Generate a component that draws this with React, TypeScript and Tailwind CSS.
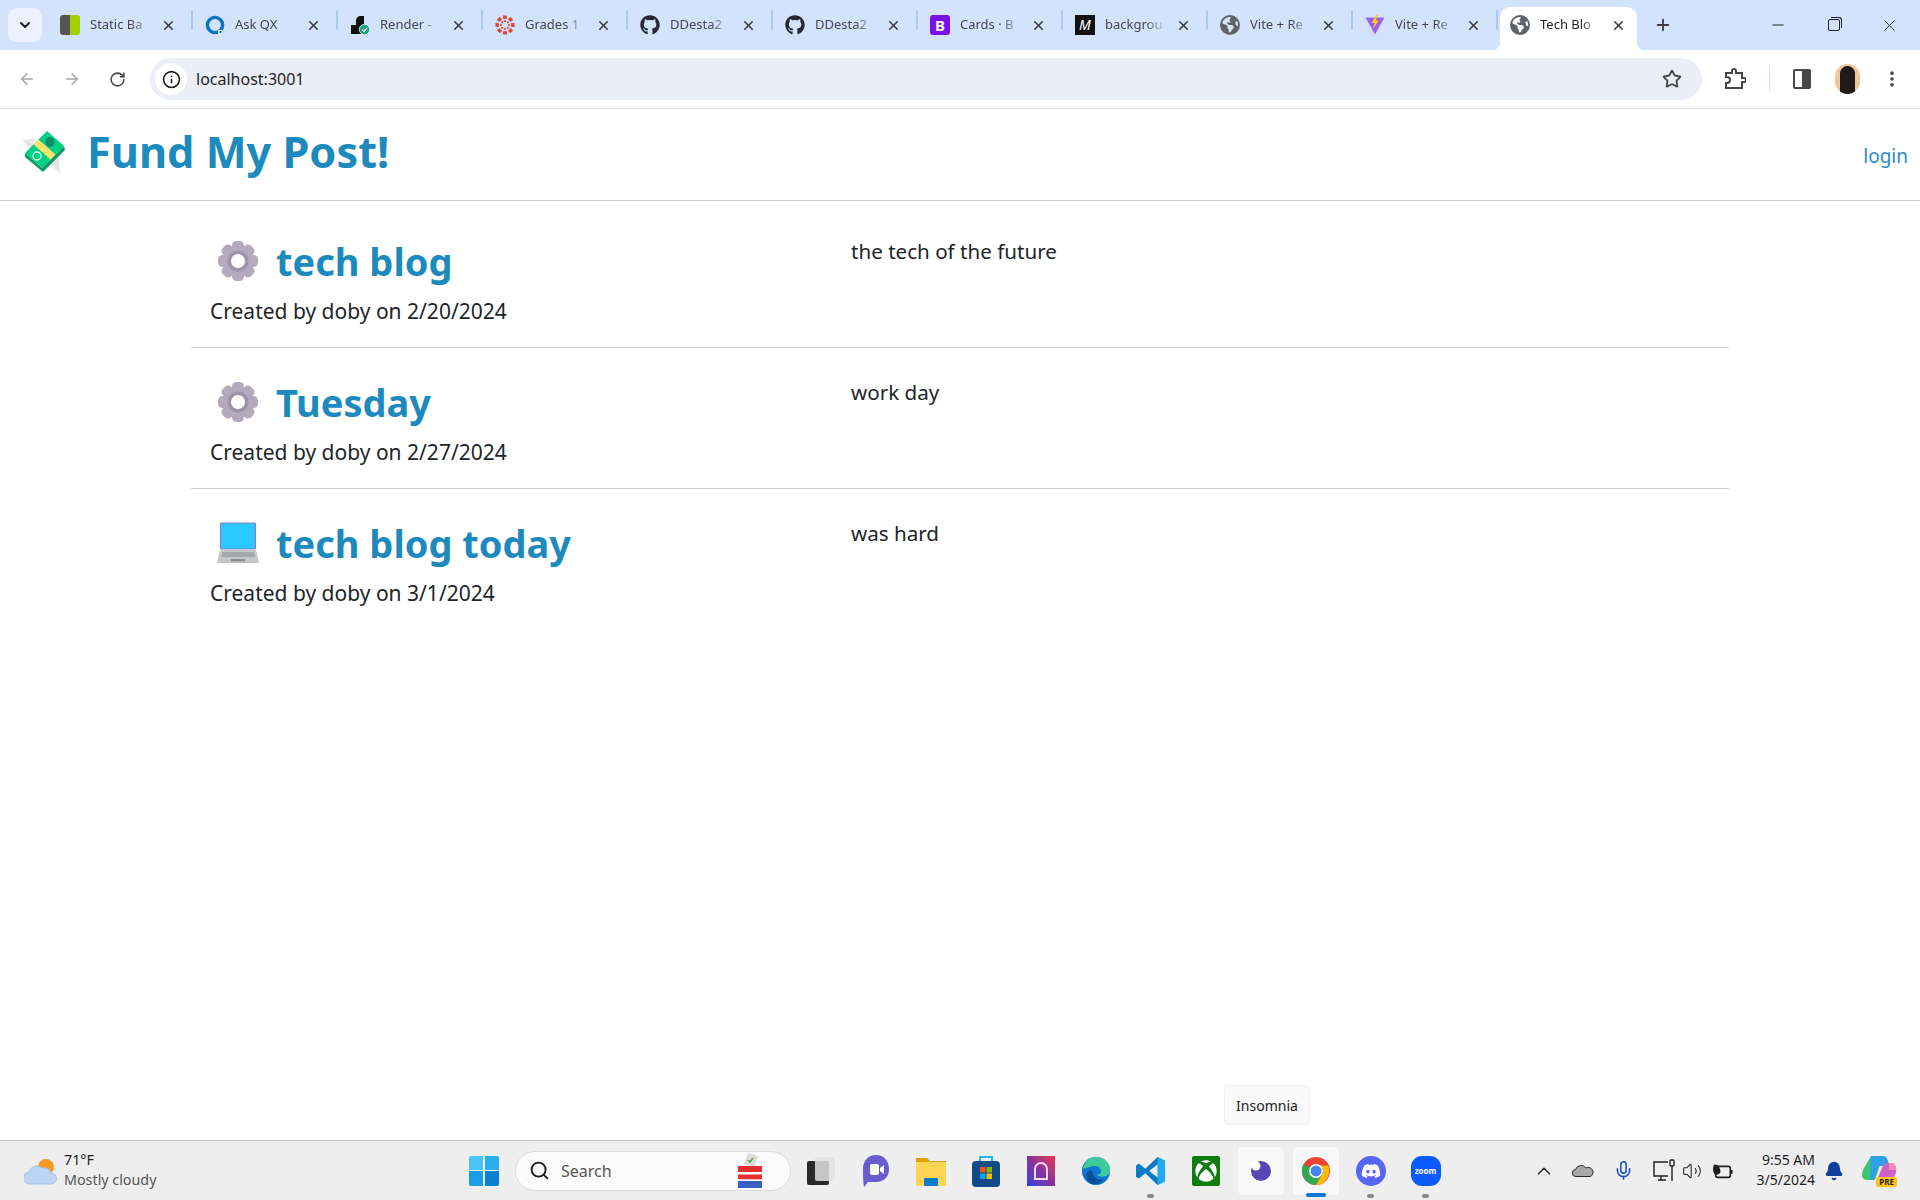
import {
  ArrowLeft,
  ArrowRight,
  Bell,
  ChevronDown,
  ChevronUp,
  Info,
  Mic,
  Minus,
  MoreVertical,
  Plus,
  RotateCw,
  Search,
  Star,
  Volume2,
  X,
} from "lucide-react";
import { FaDiscord, FaEarthAmericas, FaGithub, FaXbox } from "react-icons/fa6";
import type { ReactNode } from "react";

const FONT = "font-['Noto_Sans','Open_Sans',sans-serif]";

function StaticIcon() {
  return (
    <div className="flex h-5 w-5 overflow-hidden rounded-[3px]">
      <div className="w-1/2 bg-[#555555]" />
      <div className="w-1/2 bg-[#a2cf00]" />
    </div>
  );
}

function QxIcon() {
  return (
    <svg viewBox="0 0 20 20" className="h-5 w-5">
      <circle cx="10" cy="10" r="7.6" fill="none" stroke="#0a74c4" strokeWidth="3.4" />
      <rect x="13" y="15" width="4" height="4" fill="#ffffff" />
      <rect x="14.5" y="16" width="2" height="2" fill="#0a74c4" />
    </svg>
  );
}

function RenderIcon() {
  return (
    <svg viewBox="0 0 20 20" className="h-5 w-5">
      <path d="M1 10h5V6c0-3 2-5 5-5h3v9c-2 1-3 3-3 6v3H1z" fill="#111111" />
      <circle cx="14.5" cy="14.5" r="5.2" fill="#10a37f" stroke="#ffffff" strokeWidth="0.8" />
      <path d="M12 14.5l2 2 3-3.6" fill="none" stroke="#ffffff" strokeWidth="1.3" />
    </svg>
  );
}

function CanvasIcon() {
  const dots = [0, 45, 90, 135, 180, 225, 270, 315];
  return (
    <svg viewBox="0 0 20 20" className="h-5 w-5">
      {dots.map((a) => (
        <g key={a} transform={`rotate(${a} 10 10)`}>
          <rect x="8" y="0.5" width="4" height="3.4" fill="#e4453a" />
          <circle cx="10" cy="6" r="1.1" fill="#e4453a" />
        </g>
      ))}
    </svg>
  );
}

function BootstrapIcon() {
  return (
    <div className="flex h-5 w-5 items-center justify-center rounded-[3px] bg-[#7a10ee] text-[15px] font-bold leading-none text-white">
      B
    </div>
  );
}

function MediumIcon() {
  return (
    <div className="flex h-5 w-5 items-center justify-center bg-[#111111] text-[14px] italic leading-none text-white">
      M
    </div>
  );
}

function ViteIcon() {
  return (
    <svg viewBox="0 0 20 20" className="h-5 w-5">
      <path d="M0.5 2.5L10 19.5 19.5 2.5z" fill="#a55cf0" />
      <path d="M3.5 3.5L10 16 16 3.5z" fill="#8f5bf5" />
      <path d="M11 0L6.5 8h3L8 14l6-8.5h-3.2L13 0z" fill="#ffc81f" />
    </svg>
  );
}

function GlobeIcon() {
  return <FaEarthAmericas className="h-5 w-5 text-[#5f6368]" />;
}

type TabItem = { title: string; icon: ReactNode; active?: boolean };

const tabs: TabItem[] = [
  { title: "Static Ba", icon: <StaticIcon /> },
  { title: "Ask QX", icon: <QxIcon /> },
  { title: "Render -", icon: <RenderIcon /> },
  { title: "Grades 1", icon: <CanvasIcon /> },
  { title: "DDesta2", icon: <FaGithub className="h-5 w-5 text-[#24292f]" /> },
  { title: "DDesta2", icon: <FaGithub className="h-5 w-5 text-[#24292f]" /> },
  { title: "Cards · B", icon: <BootstrapIcon /> },
  { title: "backgrou", icon: <MediumIcon /> },
  { title: "Vite + Re", icon: <GlobeIcon /> },
  { title: "Vite + Re", icon: <ViteIcon /> },
  { title: "Tech Blo", icon: <GlobeIcon />, active: true },
];

function Tab({ title, icon, active }: TabItem) {
  return (
    <div className={`relative flex h-[43px] shrink-0 items-center pb-[7px] ${active ? "mx-[4px] w-[137px] rounded-t-[10px] bg-white pl-[10px]" : "w-[145px] pl-[14px]"}`}>
      <div className="flex w-5 shrink-0 items-center justify-center">{icon}</div>
      <div className={`ml-[10px] w-[65px] overflow-hidden whitespace-nowrap text-[13px] [mask-image:linear-gradient(to_right,black_62%,transparent_96%)] ${active ? "text-[#1f1f1f]" : "text-[#474747]"}`}>
        {title}
      </div>
      <X className="ml-[6px] h-[15px] w-[15px] text-[#3c3c3c]" strokeWidth={2.5} />
      {!active && <div className="absolute right-[-2px] top-[3px] h-[20px] w-[2px] rounded bg-[#a8c7fa]" />}
      {active && (
        <>
          <div className="absolute -left-2 bottom-0 h-2 w-2 bg-[radial-gradient(circle_at_0_0,transparent_8px,white_8.5px)]" />
          <div className="absolute -right-2 bottom-0 h-2 w-2 bg-[radial-gradient(circle_at_100%_0,transparent_8px,white_8.5px)]" />
        </>
      )}
    </div>
  );
}

function MoneyLogo() {
  return (
    <svg viewBox="0 0 44 44" className="h-[44px] w-[44px] shrink-0">
      <path d="M0 10l13-1 -4 11z" fill="#e6e6e6" />
      <path d="M27 33l10-9 1 20z" fill="#e6e6e6" />
      <path d="M3 23L20 38 42 16 43 20 21 42 3 27z" fill="#0b9a63" />
      <path d="M25 1L42 16 20 38 3 23z" fill="#00cf84" />
      <path d="M16.500 9.500L33.500 24.500 28.500 29.500 11.500 14.500z" fill="#fbe36a" />
      <ellipse cx="28" cy="12" rx="4.500" ry="5" fill="#0b8f63" />
      <circle cx="15" cy="26" r="4" fill="none" stroke="#d4fbe8" strokeWidth="1.500" />
    </svg>
  );
}

function GearIcon() {
  const teeth = [0, 45, 90, 135, 180, 225, 270, 315];
  return (
    <svg viewBox="0 0 42 42" className="h-[42px] w-[42px] shrink-0">
      {teeth.map((a) => (
        <rect key={a} x="15" y="1" width="12" height="11" rx="4.500" fill="#b4aabd" transform={`rotate(${a} 21 21)`} />
      ))}
      <circle cx="21" cy="21" r="14" fill="#b4aabd" />
      <circle cx="21" cy="21" r="10.500" fill="#9c92ab" />
      <circle cx="21" cy="21" r="7" fill="#ffffff" />
    </svg>
  );
}

function LaptopIcon() {
  return (
    <svg viewBox="0 0 42 42" className="h-[42px] w-[42px] shrink-0">
      <rect x="3.500" y="1" width="35" height="26" rx="1" fill="#29c8ff" stroke="#8a80bd" strokeWidth="1.200" />
      <path d="M3 28h36l3 13H0z" fill="#c4c6c8" />
      <path d="M5 30h32l1 5H4z" fill="#a5a7aa" />
      <rect x="14" y="37" width="14" height="2.500" fill="#8c8e91" />
    </svg>
  );
}

type Post = { icon: ReactNode; title: string; date: string; description: string };

const posts: Post[] = [
  { icon: <GearIcon />, title: "tech blog", date: "2/20/2024", description: "the tech of the future" },
  { icon: <GearIcon />, title: "Tuesday", date: "2/27/2024", description: "work day" },
  { icon: <LaptopIcon />, title: "tech blog today", date: "3/1/2024", description: "was hard" },
];

function PostRow({ post, last }: { post: Post; last: boolean }) {
  return (
    <div className={`flex h-[141px] ${last ? "" : "border-b border-[#cfcfcf]"}`}>
      <div className="w-[660px] pl-[19px] pt-[28px]">
        <div className="flex h-[52px] items-center gap-[17px] pl-[7px] text-[38px] font-bold leading-none text-[#1c8abd]">
          {post.icon}
          <span>{post.title}</span>
        </div>
        <div className="mt-[10px] text-[21px] leading-[28px] text-[#212529]">
          Created by doby on {post.date}
        </div>
      </div>
      <div className="pt-[29px] text-[20.6px] leading-[30px] text-[#212529]">{post.description}</div>
    </div>
  );
}

function ChromeIcon() {
  return (
    <svg viewBox="0 0 32 32" className="h-[30px] w-[30px]">
      <circle cx="16" cy="16" r="15" fill="#ea4335" />
      <path d="M16 16L3 23.500A15 15 0 0 1 3 8.500z" fill="#34a853" />
      <path d="M16 16l-13 7.500A15 15 0 0 0 16 31l8-15z" fill="#34a853" />
      <path d="M16 10h13a15 15 0 0 1-13 21l8-14z" fill="#fbbc04" />
      <circle cx="16" cy="16" r="7.400" fill="#ffffff" />
      <circle cx="16" cy="16" r="5.800" fill="#4285f4" />
    </svg>
  );
}

function EdgeIcon() {
  return (
    <svg viewBox="0 0 32 32" className="h-[30px] w-[30px]">
      <circle cx="16" cy="16" r="15" fill="#0c78d0" />
      <path d="M2 13C4 5 10 1 16 1c8 0 15 6 15 14 0 5-4 7-8 7-3 0-5-1-6-2 3 0 5-2 4-5-1-4-5-5-9-4-5 1-8 3-10 2z" fill="#3ecb9a" />
      <path d="M12 16c0 6 5 10 12 9-3 4-8 6-12 5-5-2-7-7-6-11 1-3 4-5 6-3z" fill="#0a4f96" />
    </svg>
  );
}

function VsCodeIcon() {
  return (
    <svg viewBox="0 0 32 32" className="h-[30px] w-[30px]">
      <path d="M23 1l8 4v22l-8 4-13-12.500L3 24l-3-2V10l3-2 7 5.500z" fill="#0a7bc4" />
      <path d="M23 1l8 4v22l-8 4z" fill="#23a9f2" />
      <path d="M23 9l-9 7 9 7z" fill="#eeeeee" />
    </svg>
  );
}

function CopilotIcon() {
  return (
    <div className="relative ml-[17px] h-[32px] w-[36px] shrink-0">
      <svg viewBox="0 0 36 26" className="h-[26px] w-[36px]">
        <path d="M10 1h12l-8 24H6C1 25 0 20 2 15z" fill="#3fc46f" />
        <path d="M10 1h12c3 0 4 2 5 5l1 5H18l-5 14H9z" fill="#2f9fe8" />
        <path d="M26 8h5c3 0 5 5 4 9-1 5-4 8-8 8H16l5-12c1-3 3-5 5-5z" fill="#d060c8" />
        <path d="M28 8h3c3 0 4 4 4 7H28z" fill="#f08ab0" />
      </svg>
      <div className="absolute bottom-0 right-0 rounded-[2px] bg-[#ffc21a] px-[3px] text-[8px] font-bold leading-[10px] text-[#1f1f1f]">
        PRE
      </div>
    </div>
  );
}

function TaskTile({ children, tile, dot, active }: { children: ReactNode; tile?: boolean; dot?: boolean; active?: boolean }) {
  return (
    <div className="relative flex h-[59px] w-[55px] shrink-0 items-center justify-center">
      {tile && <div className="absolute bottom-[4px] left-[4px] right-[3px] top-[5px] rounded-[5px] border border-[#ececec] bg-[#f8f8f8]" />}
      <div className="relative flex items-center justify-center">{children}</div>
      {dot && <div className="absolute bottom-[2px] h-[4px] w-[7px] rounded-full bg-[#8a8a8a]" />}
      {active && <div className="absolute bottom-[3px] h-[4px] w-[20px] rounded-full bg-[#0a78d4]" />}
    </div>
  );
}

export default function App() {
  return (
    <div className={`relative flex h-[1200px] w-[1920px] flex-col overflow-hidden bg-white ${FONT}`}>
      {/* Tab strip */}
      <div className="flex h-[50px] shrink-0 items-end bg-[#d3e3fd]">
        <div className="ml-[8px] mr-[4px] flex h-[34px] w-[34px] items-center justify-center self-center rounded-[9px] bg-[#ebf2fe]">
          <ChevronDown className="h-4 w-4 text-[#1f1f1f]" strokeWidth={3} />
        </div>
        {tabs.map((t, i) => (
          <Tab key={i} {...t} />
        ))}
        <div className="flex h-[43px] w-[44px] items-center justify-center pb-[7px]">
          <Plus className="h-[18px] w-[18px] text-[#3c3c3c]" strokeWidth={2.4} />
        </div>
        <div className="flex h-[50px] items-center">
          <Minus className="ml-[84px] h-[18px] w-[18px] text-[#222222]" strokeWidth={1.3} />
          <div className="relative ml-[41px] h-[12px] w-[12px] rounded-[2px] border border-[#222222]">
            <div className="absolute -right-[3px] -top-[3px] h-[11px] w-[11px] rounded-tr-[3px] border-r border-t border-[#222222]" />
          </div>
          <X className="ml-[40px] h-[19px] w-[19px] text-[#222222]" strokeWidth={1.1} />
        </div>
      </div>

      {/* Toolbar */}
      <div className="flex h-[59px] shrink-0 items-center rounded-t-[10px] border-b border-[#e0e0e0] bg-white">
        <ArrowLeft className="ml-[18px] h-[18px] w-[18px] text-[#a6a6a6]" strokeWidth={2} />
        <ArrowRight className="ml-[27px] h-[18px] w-[18px] text-[#a6a6a6]" strokeWidth={2} />
        <RotateCw className="ml-[28px] h-[17px] w-[17px] text-[#474747]" strokeWidth={2.2} />
        <div className="ml-[24px] flex h-[42px] w-[1552px] items-center rounded-full bg-[#ebeef7] pl-[5px]">
          <div className="flex h-8 w-8 items-center justify-center rounded-full bg-white">
            <Info className="h-[19px] w-[19px] text-[#1f1f1f]" strokeWidth={2} />
          </div>
          <span className="ml-[9px] text-[16px] text-[#1f1f1f]">localhost:3001</span>
          <Star className="ml-auto mr-[20px] h-[20px] w-[20px] text-[#474747]" strokeWidth={2.2} />
        </div>
        <svg viewBox="0 0 22 22" className="ml-[22px] h-[22px] w-[22px] text-[#474747]" fill="none" stroke="currentColor" strokeWidth="2">
          <path d="M2 5h6V3a2 2 0 0 1 4 0v2h6v5h2a2 2 0 0 1 0 4h-2v6H2v-5h1a3 3 0 0 0 0-6H2z" />
        </svg>
        <div className="ml-[23px] h-[26px] w-px bg-[#d3e3fd]" />
        <div className="ml-[23px] flex h-[20px] w-[18px] overflow-hidden rounded-[2px] border-2 border-[#474747]">
          <div className="w-1/2 bg-white" />
          <div className="w-1/2 bg-[#474747]" />
        </div>
        <div className="ml-[24px] flex h-[30px] w-[25px] items-end justify-center overflow-hidden rounded-full bg-[#f0c79c]">
          <div className="h-[28px] w-[15px] rounded-t-full bg-[#1f1a17]" />
        </div>
        <MoreVertical className="ml-[22px] h-[20px] w-[20px] text-[#474747]" strokeWidth={2.4} />
      </div>

      {/* Site header */}
      <div className="flex h-[92px] shrink-0 items-center justify-between border-b border-[#cfcfcf] pl-[22px] pr-[12px]">
        <div className="flex items-center gap-[21px] pb-[5px]">
          <MoneyLogo />
          <span className="text-[43.300px] font-bold leading-none text-[#1c8abd]">Fund My Post!</span>
        </div>
        <a className="pt-[3px] text-[19px] text-[#2a8ac6]">login</a>
      </div>

      {/* Posts */}
      <div className="flex-1 pt-[6px]">
        <div className="ml-[191px] w-[1538px]">
          {posts.map((p, i) => (
            <PostRow key={p.title} post={p} last={i === posts.length - 1} />
          ))}
        </div>
      </div>

      {/* Tooltip */}
      <div className="absolute left-[1224px] top-[1085px] flex h-[40px] w-[86px] items-center justify-center rounded-[5px] border border-[#efefef] bg-[#f9f9f9] text-[14px] text-[#222222]">
        Insomnia
      </div>

      {/* Taskbar */}
      <div className="flex h-[60px] shrink-0 items-center border-t border-[#c4c4c4] bg-[#eeeeee]">
        <svg viewBox="0 0 34 30" className="ml-[24px] h-[30px] w-[34px] shrink-0">
          <circle cx="22" cy="11" r="8" fill="#f59b23" />
          <path d="M6 28a6 6 0 0 1-1-12 8 8 0 0 1 13-4 7 7 0 0 1 9 5 5.500 5.500 0 0 1 0 11z" fill="#bcd3f2" stroke="#9ab9e3" strokeWidth="0.8" />
        </svg>
        <div className="ml-[6px] flex w-[405px] shrink-0 flex-col pb-[2px] text-[14.300px] leading-[20px]">
          <span className="text-[#1f1f1f]">71°F</span>
          <span className="text-[#555555]">Mostly cloudy</span>
        </div>
        <div className="grid h-[30px] w-[30px] shrink-0 grid-cols-2 gap-[1.500px]">
          <div className="rounded-tl-[2px] bg-[#47c4f8]" />
          <div className="rounded-tr-[2px] bg-[#2aaef0]" />
          <div className="rounded-bl-[2px] bg-[#1a9ce6]" />
          <div className="rounded-br-[2px] bg-[#0a7fd6]" />
        </div>
        <div className="ml-[16px] mr-[2px] flex h-[40px] w-[276px] shrink-0 items-center rounded-full border border-[#dcdcdc] bg-[#fbfbfb] pl-[13px]">
          <Search className="h-[21px] w-[21px] text-[#1f1f1f]" strokeWidth={2.2} />
          <span className="ml-[11px] text-[16px] text-[#555555]">Search</span>
          <svg viewBox="0 0 26 38" className="ml-auto mr-[27px] h-[38px] w-[26px]">
            <path d="M11 1l10 3-4 11-10-3z" fill="#dcdcdc" />
            <path d="M11 8l2 2 3-4" fill="none" stroke="#5aa83c" strokeWidth="1.500" />
            <rect x="1" y="14" width="24" height="6" fill="#e62e2e" />
            <rect x="1" y="20" width="24" height="2.500" fill="#ffffff" />
            <rect x="1" y="22.500" width="24" height="5" fill="#e62e2e" />
            <rect x="1" y="27.500" width="24" height="1.500" fill="#ffffff" />
            <rect x="1" y="29" width="24" height="7" fill="#3b5fc4" />
          </svg>
        </div>
        <TaskTile>
          <div className="relative h-[28px] w-[28px]">
            <div className="absolute bottom-0 left-0 h-[24px] w-[22px] rounded-[2px] bg-[#2a2a2a]" />
            <div className="absolute right-0 top-0 h-[24px] w-[20px] rounded-[2px] bg-[#e2e2e2]/85" />
          </div>
        </TaskTile>
        <TaskTile>
          <svg viewBox="0 0 28 34" className="h-[34px] w-[28px]">
            <path d="M14 1c8 0 13 6 13 14s-5 13-13 13H6l-4 5c-1-5-1-12-1-18C1 7 6 1 14 1z" fill="#6a5bd0" />
            <rect x="8" y="10" width="9" height="11" rx="2" fill="#ffffff" />
            <path d="M18 14l4-3v9l-4-3z" fill="#ffffff" />
          </svg>
        </TaskTile>
        <TaskTile>
          <svg viewBox="0 0 30 30" className="h-[30px] w-[30px]">
            <path d="M0 2h11l3 3h16v3H0z" fill="#dca000" />
            <rect y="6" width="30" height="24" fill="#ffd452" />
            <rect x="8" y="22" width="14" height="8" rx="1" fill="#0a7cc9" />
          </svg>
        </TaskTile>
        <TaskTile>
          <svg viewBox="0 0 28 32" className="h-[32px] w-[28px]">
            <path d="M8 6V2h12v4" fill="none" stroke="#26b6f0" strokeWidth="2" />
            <rect y="6" width="28" height="26" rx="4" fill="#134b86" />
            <rect x="8" y="12" width="5.500" height="5.500" fill="#f25022" />
            <rect x="14.500" y="12" width="5.500" height="5.500" fill="#7fba00" />
            <rect x="8" y="18.500" width="5.500" height="5.500" fill="#00a4ef" />
            <rect x="14.500" y="18.500" width="5.500" height="5.500" fill="#ffb900" />
          </svg>
        </TaskTile>
        <TaskTile>
          <div className="flex h-[30px] w-[28px] items-center justify-center bg-gradient-to-tr from-[#1a3fe0] via-[#8a2f9c] to-[#ef2b3c]">
            <div className="h-[18px] w-[14px] rounded-t-full border-2 border-[#f3d9ee]" />
          </div>
        </TaskTile>
        <TaskTile>
          <EdgeIcon />
        </TaskTile>
        <TaskTile dot>
          <VsCodeIcon />
        </TaskTile>
        <TaskTile>
          <div className="flex h-[30px] w-[28px] items-center justify-center rounded-[2px] bg-[#107c10]">
            <FaXbox className="h-[22px] w-[22px] text-white" />
          </div>
        </TaskTile>
        <TaskTile tile>
          <svg viewBox="0 0 24 24" className="h-[24px] w-[24px]">
            <circle cx="12" cy="12" r="11" fill="#ffffff" />
            <circle cx="12" cy="12" r="10" fill="#5a45b5" />
            <circle cx="7" cy="7" r="4.500" fill="#ffffff" />
          </svg>
        </TaskTile>
        <TaskTile tile active>
          <ChromeIcon />
        </TaskTile>
        <TaskTile dot>
          <div className="flex h-[30px] w-[30px] items-center justify-center rounded-full bg-[#5865f2]">
            <FaDiscord className="h-[20px] w-[20px] text-white" />
          </div>
        </TaskTile>
        <TaskTile dot>
          <div className="flex h-[30px] w-[30px] items-center justify-center rounded-[11px] bg-[#0b5cff] text-[8px] font-bold text-white">
            zoom
          </div>
        </TaskTile>
        <ChevronUp className="ml-[80px] h-[22px] w-[22px] shrink-0 text-[#222222]" strokeWidth={1.6} />
        <svg viewBox="0 0 22 14" className="ml-[17px] h-[15px] w-[22px] shrink-0">
          <path d="M4 13a3.500 3.500 0 0 1-.500-7A6 6 0 0 1 14 4.500 4.500 4.500 0 0 1 18.500 13z" fill="#a8a8a8" stroke="#2c2c2c" strokeWidth="1" />
        </svg>
        <Mic className="ml-[19px] h-[21px] w-[21px] shrink-0 text-[#1a56b8]" strokeWidth={1.8} />
        <svg viewBox="0 0 24 24" className="ml-[18px] h-[24px] w-[24px] shrink-0" fill="none" stroke="#1f1f1f" strokeWidth="1.400">
          <path d="M16 3H2v14h14" />
          <path d="M6 21h8M9 17v4" />
          <rect x="18" y="1" width="4" height="6" rx="1" />
          <path d="M20 7v15" />
        </svg>
        <Volume2 className="ml-[6px] h-[20px] w-[20px] shrink-0 text-[#2c2c2c]" strokeWidth={1.3} />
        <svg viewBox="0 0 24 18" className="ml-[10px] h-[18px] w-[22px] shrink-0">
          <rect x="4" y="4" width="16" height="12" rx="2" fill="none" stroke="#1f1f1f" strokeWidth="1.800" />
          <rect x="20" y="8" width="2.500" height="4" fill="#1f1f1f" />
          <path d="M2 2c4 0 6 2 7 6 1 3-1 5-4 5S0 10 2 2z" fill="#1f1f1f" />
        </svg>
        <div className="ml-[11px] flex w-[70px] shrink-0 flex-col items-end pb-[2px] text-[14px] leading-[20px] text-[#1f1f1f]">
          <span>9:55 AM</span>
          <span>3/5/2024</span>
        </div>
        <Bell className="ml-[9px] h-[20px] w-[20px] shrink-0 fill-[#0f3f9c] text-[#0f3f9c]" />
        <CopilotIcon />
      </div>
    </div>
  );
}
